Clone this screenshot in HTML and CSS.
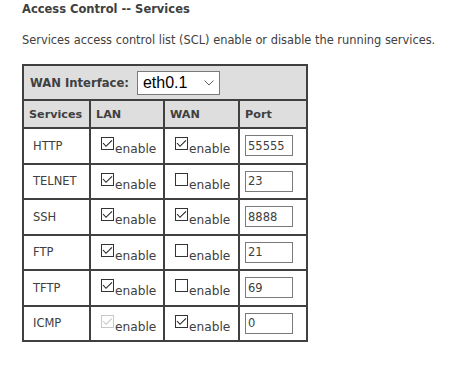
FILE: index.html
```html
<!DOCTYPE html>
<html>
<head>
	<title>Access Control -- Services</title>
	<meta charset="utf-8">
	<link rel="stylesheet" href="styles.css">
</head>
<body>
<div id="content">
	<div class="title">Access Control -- Services</div>
	<p class="desc">Services access control list (SCL) enable or disable the running services.</p>
	<table class="scl" cellspacing="0">
		<tr class="ifrow">
			<th colspan="4">
				<div class="ifbox">
					<span>WAN Interface:</span>
					<select class="ifsel">
						<option>eth0.1</option>
					</select>
				</div>
			</th>
		</tr>
		<tr class="headrow">
			<th class="c-svc">Services</th>
			<th class="c-lan">LAN</th>
			<th class="c-wan">WAN</th>
			<th class="c-port">Port</th>
		</tr>
		<tr>
			<td class="svc">HTTP</td>
			<td><input type="checkbox" checked><span class="en">enable</span></td>
			<td><input type="checkbox" checked><span class="en">enable</span></td>
			<td><input class="port" type="text" value="55555"></td>
		</tr>
		<tr>
			<td class="svc">TELNET</td>
			<td><input type="checkbox" checked><span class="en">enable</span></td>
			<td><input type="checkbox"><span class="en">enable</span></td>
			<td><input class="port" type="text" value="23"></td>
		</tr>
		<tr>
			<td class="svc">SSH</td>
			<td><input type="checkbox" checked><span class="en">enable</span></td>
			<td><input type="checkbox" checked><span class="en">enable</span></td>
			<td><input class="port" type="text" value="8888"></td>
		</tr>
		<tr>
			<td class="svc">FTP</td>
			<td><input type="checkbox" checked><span class="en">enable</span></td>
			<td><input type="checkbox"><span class="en">enable</span></td>
			<td><input class="port" type="text" value="21"></td>
		</tr>
		<tr>
			<td class="svc">TFTP</td>
			<td><input type="checkbox" checked><span class="en">enable</span></td>
			<td><input type="checkbox"><span class="en">enable</span></td>
			<td><input class="port" type="text" value="69"></td>
		</tr>
		<tr>
			<td class="svc">ICMP</td>
			<td><input type="checkbox" checked disabled><span class="en">enable</span></td>
			<td><input type="checkbox" checked><span class="en">enable</span></td>
			<td><input class="port" type="text" value="0"></td>
		</tr>
	</table>
</div>
</body>
</html>
```
FILE: styles.css
```css
body {
	margin:0;
	padding:0;
	background-color:#ffffff;
	color:#404040;
	font-family: "DejaVu Sans", sans-serif;
}
#content {
	padding:2px 0 0 22px;
}
.title {
	font-size:11.5px;
	font-weight:bold;
	line-height:15px;
	margin:0;
}
.desc {
	font-size:11.4px;
	line-height:15px;
	white-space:nowrap;
	margin:16px 0 16px 0;
}
.scl {
	border-collapse:separate;
	border-spacing:0;
	border-top:2px solid #404040;
	border-left:2px solid #404040;
	width:286px;
}
.scl th, .scl td {
	box-sizing:border-box;
	border-right:2px solid #404040;
	border-bottom:2px solid #404040;
	padding:0 0 0 6px;
	text-align:left;
	vertical-align:middle;
	white-space:nowrap;
}
.scl th {
	background-color:#dedede;
	font-size:11.2px;
	font-weight:bold;
	padding-left:5px;
}
.ifrow th {height:35px;padding-left:6px;font-size:11.6px;}
.headrow th {height:28px;}
.c-svc {width:67px;}
.c-lan {width:74px;}
.c-wan {width:75px;}
.c-port {width:68px;}
.scl td {height:35.5px;background:#ffffff;}
.scl td.svc {font-size:11.5px;padding-left:9px;}
.scl td:last-child {padding-left:5px;}

.ifbox {
	display:flex;
	align-items:center;
	gap:8px;
}
.ifsel {
	-webkit-appearance:none;
	appearance:none;
	width:83px;
	height:24px;
	margin:0;
	padding:0 0 0 5px;
	border:1px solid #7a7a7a;
	border-radius:0;
	color:#000000;
	font-family:"Liberation Sans", Arial, sans-serif;
	font-size:16px;
	background:#ffffff url("data:image/svg+xml,%3Csvg xmlns='http://www.w3.org/2000/svg' width='10' height='6'%3E%3Cpath d='M0.5 0.5L5 5L9.5 0.5' fill='none' stroke='%23606060' stroke-width='1'/%3E%3C/svg%3E") no-repeat right 5px center;
}

input[type=checkbox] {
	-webkit-appearance:none;
	appearance:none;
	box-sizing:border-box;
	width:13px;
	height:13px;
	margin:3px 1px 3px 4px;
	border:1px solid #333333;
	border-radius:0;
	background:#ffffff;
	vertical-align:baseline;
}
input[type=checkbox]:checked {
	background:#ffffff url("data:image/svg+xml,%3Csvg xmlns='http://www.w3.org/2000/svg' width='11' height='11'%3E%3Cpath d='M1 5L4 8.3L10 2.3' fill='none' stroke='%23222222' stroke-width='1.1'/%3E%3C/svg%3E") no-repeat 0 0;
}
input[type=checkbox]:disabled {
	border-color:#c8c8c8;
}
input[type=checkbox]:checked:disabled {
	background-image:url("data:image/svg+xml,%3Csvg xmlns='http://www.w3.org/2000/svg' width='11' height='11'%3E%3Cpath d='M1 5L4 8.3L10 2.3' fill='none' stroke='%23c8c8c8' stroke-width='1.1'/%3E%3C/svg%3E");
}
.en {
	font-size:12.2px;
}
.port {
	box-sizing:border-box;
	width:48px;
	height:21px;
	margin:0;
	padding:0 2px;
	border:1px solid #7a7a7a;
	border-radius:0;
	color:#404040;
	font-family:"DejaVu Sans", sans-serif;
	font-size:11.5px;
	vertical-align:middle;
}
```
